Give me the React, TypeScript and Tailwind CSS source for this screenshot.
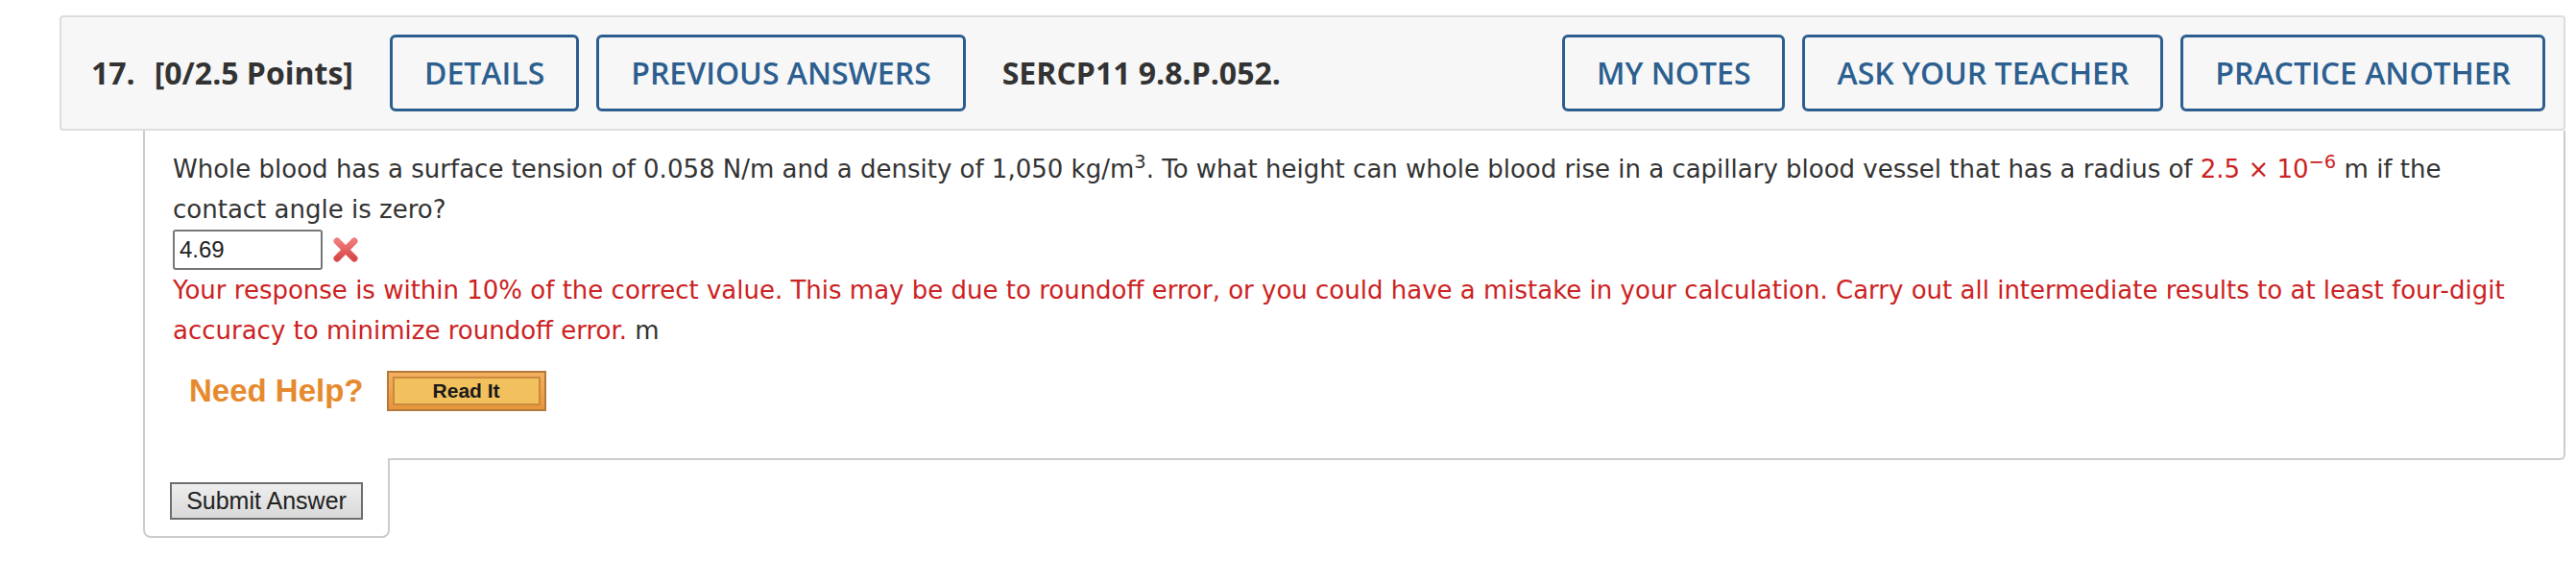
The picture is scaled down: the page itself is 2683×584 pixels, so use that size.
import React from 'react'

const headFont = { fontFamily: '"Open Sans", "Liberation Sans", sans-serif' }
const bodyFont = { fontFamily: '"DejaVu Sans", Verdana, sans-serif' }
const arial = { fontFamily: '"Liberation Sans", Arial, sans-serif' }

function HeadButton({ label }: { label: string }) {
  return (
    <div className="flex h-[80px] items-center rounded-[6px] border-[3px] border-[#2c5f8f] px-[33px] text-[32px] font-semibold text-[#2c5f8f]">
      {label}
    </div>
  )
}

function WrongMark() {
  return (
    <svg width="28" height="26" viewBox="0 0 28 26" className="ml-[10px]">
      <defs>
        <linearGradient id="xg" x1="0" y1="0" x2="0" y2="1">
          <stop offset="0" stopColor="#f07a7a" />
          <stop offset="1" stopColor="#d84848" />
        </linearGradient>
      </defs>
      <path d="M5 4 L23 22 M23 4 L5 22" stroke="url(#xg)" strokeWidth="7" strokeLinecap="round" />
    </svg>
  )
}

function ReadIt() {
  return (
    <div className="ml-[24px] flex h-[42px] w-[166px] items-center justify-center border-2 border-[#b27a3a] bg-gradient-to-b from-[#f4b060] to-[#e8953a] p-[4px]">
      <div
        className="flex h-full w-full items-center justify-center border-2 border-[#c98a3e] bg-[#f2c05c] text-[21px] font-bold text-[#1a1a1a]"
        style={arial}
      >
        Read It
      </div>
    </div>
  )
}

export default function App() {
  return (
    <div className="h-[584px] w-[2683px] bg-white pl-[62px] pr-[11px] pt-[16px]">
      <div
        className="flex h-[120px] items-center rounded-[4px] border-2 border-[#dddddd] bg-[#f7f7f7] pl-[31px] pr-[19px] text-[#333333]"
        style={headFont}
      >
        <span className="text-[32px] font-bold">17.</span>
        <span className="ml-[20px] mr-[38px] text-[32px] font-bold">[0/2.5 Points]</span>
        <div className="flex gap-[18px]">
          <HeadButton label="DETAILS" />
          <HeadButton label="PREVIOUS ANSWERS" />
        </div>
        <span className="ml-[38px] text-[32px] font-bold">SERCP11 9.8.P.052.</span>
        <div className="ml-auto flex gap-[18px]">
          <HeadButton label="MY NOTES" />
          <HeadButton label="ASK YOUR TEACHER" />
          <HeadButton label="PRACTICE ANOTHER" />
        </div>
      </div>

      <div className="ml-[87px]">
        <div
          className="rounded-br-[6px] border-x-2 border-b-2 border-[#cccccc] pb-[49px] pl-[29px] pr-[45px] pt-[19px] text-[26px] leading-[42px] text-[#333333]"
          style={bodyFont}
        >
          <p>
            Whole blood has a surface tension of 0.058 N/m and a density of 1,050 kg/m<sup>3</sup>. To what height can
            whole blood rise in a capillary blood vessel that has a radius of{' '}
            <span className="text-[#cc2222]">
              2.5 × 10<sup>−6</sup>
            </span>{' '}
            m if the contact angle is zero?
          </p>
          <div className="flex h-[42px] items-center">
            <div
              className="flex h-[42px] w-[156px] items-center rounded-[3px] border-2 border-[#777777] bg-white pl-[5px] text-[24px] text-[#222222]"
              style={arial}
            >
              4.69
            </div>
            <WrongMark />
          </div>
          <p>
            <span className="text-[#cc2222]">
              Your response is within 10% of the correct value. This may be due to roundoff error, or you could have a
              mistake in your calculation. Carry out all intermediate results to at least four-digit accuracy to
              minimize roundoff error.
            </span>{' '}
            m
          </p>
          <div className="mt-[21px] flex items-center pl-[17px]">
            <span className="text-[33px] font-bold text-[#e68a2e]" style={arial}>
              Need Help?
            </span>
            <ReadIt />
          </div>
        </div>
        <div className="-mt-[2px] w-[257px] rounded-b-[8px] border-x-2 border-b-2 border-[#cccccc] bg-white pb-[17px] pl-[26px] pt-[25px]">
          <button
            className="flex h-[39px] w-[201px] items-center justify-center border-2 border-[#6e6e6e] bg-gradient-to-b from-[#eeeeee] to-[#d9d9d9] text-[25px] text-[#222222]"
            style={arial}
          >
            Submit Answer
          </button>
        </div>
      </div>
    </div>
  )
}
